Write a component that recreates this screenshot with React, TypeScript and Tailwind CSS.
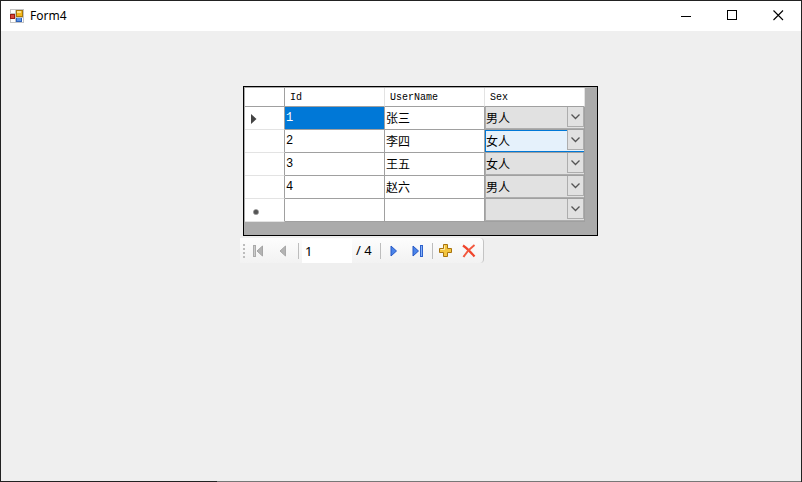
import React, { useState } from 'react';

interface Person {
  id: number;
  userName: string;
  sex: string;
}

const people: Person[] = [
  { id: 1, userName: '张三', sex: '男人' },
  { id: 2, userName: '李四', sex: '女人' },
  { id: 3, userName: '王五', sex: '女人' },
  { id: 4, userName: '赵六', sex: '男人' },
];

const FormIcon: React.FC = () => (
  <svg width="14" height="14" viewBox="0 0 14 14" shapeRendering="crispEdges" aria-hidden="true">
    <rect width="14" height="14" fill="#c4c4c4" />
    <rect x="1" y="1" width="4" height="3" fill="#fff" />
    <rect x="1" y="10" width="4" height="3" fill="#fff" />
    <rect x="12" y="9" width="1" height="4" fill="#fff" />
    <rect x="6" y="1" width="7" height="7" fill="#a8780c" />
    <rect x="7" y="2" width="5" height="5" fill="#f5b91c" />
    <rect x="7" y="2" width="4" height="2" fill="#fde08a" />
    <rect x="0" y="5" width="5" height="5" fill="#9c1c14" />
    <rect x="1" y="6" width="3" height="3" fill="#d8463c" />
    <rect x="6" y="9" width="6" height="4" fill="#2f62b8" />
    <rect x="7" y="9" width="4" height="3" fill="#5f95e6" />
  </svg>
);

const TitleBar: React.FC = () => (
  <header className="flex h-[30px] items-center bg-white pl-[9px]">
    <FormIcon />
    <h1 className="ml-1.5 flex-1 text-[12px] leading-4 text-black">Form4</h1>
    <button aria-label="Minimize" className="flex h-full w-[46px] items-center justify-center">
      <svg width="10" height="11" shapeRendering="crispEdges">
        <path d="M0 5.5H10" stroke="#000" />
      </svg>
    </button>
    <button aria-label="Maximize" className="flex h-full w-[46px] items-center justify-center">
      <svg width="11" height="12" shapeRendering="crispEdges">
        <path d="M.5 .5H9.5V9.5H.5Z" fill="none" stroke="#000" />
      </svg>
    </button>
    <button aria-label="Close" className="flex h-full w-[46px] items-center justify-center">
      <svg width="11" height="12">
        <path d="M.5 .5L10 10M10 .5L.5 10" stroke="#000" strokeWidth="1.1" />
      </svg>
    </button>
  </header>
);

interface SexSelectProps {
  label: string;
  value: string;
  highlighted: boolean;
}

const SexSelect: React.FC<SexSelectProps> = ({ label, value, highlighted }) => {
  const [selected, setSelected] = useState(value);

  return (
    <div className={`relative flex h-[22px] border-l ${highlighted ? 'border-[#0078d7]' : 'border-[#adadad]'}`}>
      <select
        aria-label={label}
        value={selected}
        onChange={(e) => setSelected(e.target.value)}
        className={`h-full w-full appearance-none border-y text-[12px] leading-5 text-black outline-none ${
          highlighted
            ? 'border-[#0078d7] bg-[#e5f1fb]'
            : 'border-t-[#e1e1e1] border-b-[#adadad] bg-[#e1e1e1]'
        }`}
      >
        <option value=""></option>
        <option value="男人">男人</option>
        <option value="女人">女人</option>
      </select>
      {/* drop-down arrow box, clicks go through to the select */}
      <span className="pointer-events-none absolute top-0 right-0 flex h-5 w-[17px] items-center justify-center border border-t-0 border-[#adadad] bg-[#e1e1e1]">
        <svg width="9" height="6">
          <path d="M.5 .5L4.5 4.5L8.5 .5" fill="none" stroke="#555" strokeWidth="1.3" />
        </svg>
      </span>
    </div>
  );
};

const rowHeader = 'border-r border-b border-r-[#a0a0a0] border-b-[#e3e3e3] bg-white';
const cell = 'border-r border-b border-[#a0a0a0] p-0';
const columnHeader =
  "border-r border-b border-r-[#e3e3e3] border-b-[#a0a0a0] bg-white pt-0.5 pb-0 pl-[5px] text-left font-['Liberation_Mono','Noto_Sans_CJK_SC',monospace] text-[10px] font-medium";

const DataGrid: React.FC = () => {
  const [current, setCurrent] = useState(1);

  return (
    <div className="h-[150px] w-[355px] border border-black bg-[#ababab] pt-px pl-px">
      <table className="w-[340px] table-fixed border-separate border-spacing-0 font-['Noto_Sans_CJK_SC',sans-serif] text-[12px] leading-5 text-black">
        <colgroup>
          <col className="w-10" />
          <col className="w-[100px]" />
          <col className="w-[100px]" />
          <col className="w-[100px]" />
        </colgroup>
        <thead>
          <tr className="h-[19px] leading-4">
            <th className="border-r border-b border-[#a0a0a0] bg-white p-0"></th>
            <th className={columnHeader}>Id</th>
            <th className={columnHeader}>UserName</th>
            <th className={columnHeader}>Sex</th>
          </tr>
        </thead>
        <tbody>
          {people.map((person) => (
            <tr key={person.id} className="h-[23px]" onClick={() => setCurrent(person.id)}>
              <td className={`${rowHeader} pt-0.5 pr-0 pb-0 pl-1.5`}>
                {person.id === current && (
                  <svg width="6" height="10" className="block">
                    <path d="M0 0L5.5 5L0 10Z" fill="#444" />
                  </svg>
                )}
              </td>
              <td
                className={`${cell} ${
                  person.id === current ? 'bg-[#0078d7] text-white' : 'bg-white'
                }`}
              >
                <span className="block pl-px font-['Liberation_Mono',monospace]">{person.id}</span>
              </td>
              <td className={`${cell} bg-white`}>
                <span className="block pl-px">{person.userName}</span>
              </td>
              <td className={cell}>
                <SexSelect
                  label={`Sex of ${person.userName}`}
                  value={person.sex}
                  highlighted={person.id === 2}
                />
              </td>
            </tr>
          ))}
          <tr className="h-[23px]">
            <td className={`${rowHeader} pt-1 pr-0 pb-0 pl-2`}>
              <svg width="6" height="6" className="block">
                <circle cx="3" cy="3" r="2.6" fill="#555" stroke="#999" strokeWidth=".6" />
              </svg>
            </td>
            <td className={`${cell} bg-white`}></td>
            <td className={`${cell} bg-white`}></td>
            <td className={cell}>
              <SexSelect label="Sex of new row" value="" highlighted={false} />
            </td>
          </tr>
        </tbody>
      </table>
    </div>
  );
};

const Separator: React.FC = () => <span className="h-4 w-px bg-[#bdbdbd]" />;

const Navigator: React.FC = () => {
  const [position, setPosition] = useState('1');
  const button = 'flex h-6 w-6 items-center justify-center';

  return (
    <nav
      aria-label="Records"
      className="mt-0.5 -ml-[3px] flex h-[25px] w-[244px] items-center rounded-r-sm border-r border-[#c4c4c4] bg-linear-to-b from-[#fdfdfd] to-[#f2f2f2] pl-[3px]"
    >
      <svg width="3" height="16" shapeRendering="crispEdges" aria-hidden="true">
        <path d="M1 1V16" stroke="#bdbdbd" strokeWidth="2" strokeDasharray="2 2" />
      </svg>
      <button aria-label="Move first" className={button}>
        <svg width="10" height="12">
          <rect x="0" y="0" width="3" height="12" fill="#aaa" />
          <rect x="1" y="1" width="1" height="10" fill="#ccc" />
          <path d="M9.5 1V11L4 6Z" fill="#b3b3b3" stroke="#a5a5a5" />
        </svg>
      </button>
      <button aria-label="Move previous" className={button}>
        <svg width="7" height="12">
          <path d="M6.5 1V11L1 6Z" fill="#b3b3b3" stroke="#a8a8a8" />
        </svg>
      </button>
      <span className="w-1" />
      <Separator />
      <input
        aria-label="Position"
        value={position}
        onChange={(e) => setPosition(e.target.value)}
        className="ml-[3px] h-6 w-[50px] bg-white pl-[3px] text-[13px] text-black outline-none"
      />
      <span className="w-7 pl-1 text-[13px] whitespace-nowrap text-black">/ 4</span>
      <Separator />
      <button aria-label="Move next" className={button}>
        <svg width="7" height="12">
          <path d="M1 1V11L6.5 6Z" fill="#4a84ea" stroke="#2557c4" />
        </svg>
      </button>
      <button aria-label="Move last" className={button}>
        <svg width="11" height="12">
          <path d="M1 1V11L6.5 6Z" fill="#4a84ea" stroke="#2557c4" />
          <rect x="8" y="0" width="3" height="12" fill="#2f62cc" />
          <rect x="9" y="1" width="1" height="10" fill="#86b2fa" />
        </svg>
      </button>
      <span className="w-[3px]" />
      <Separator />
      <button aria-label="Add new" className={button}>
        <svg width="13" height="13">
          <path
            d="M4.5 .5H8.5V4.5H12.5V8.5H8.5V12.5H4.5V8.5H.5V4.5H4.5Z"
            fill="#f3c53f"
            stroke="#a8740f"
          />
          <path d="M5.5 1.5V5.5H1.5" fill="none" stroke="#fdebaa" />
        </svg>
      </button>
      <button aria-label="Delete" className={button}>
        <svg width="14" height="14">
          <path d="M1 1.5C4.5 4 9 8.5 12.5 12.5" fill="none" stroke="#f0452c" strokeWidth="2.2" />
          <path d="M12.5 1C8.5 4 4.5 8 1.5 13" fill="none" stroke="#f2583e" strokeWidth="2" />
        </svg>
      </button>
    </nav>
  );
};

const App: React.FC = () => {
  return (
    <div className="flex min-h-screen flex-col border-x border-t border-[#222] bg-[#efefef] font-['Noto_Sans','Noto_Sans_CJK_SC',sans-serif]">
      <TitleBar />
      <main className="flex-1 pt-[55px] pl-[242px]">
        <DataGrid />
        <Navigator />
      </main>
      <div className="flex h-px bg-[#777]">
        <span className="w-[27%] bg-[#222]" />
      </div>
    </div>
  );
};

export default App;
